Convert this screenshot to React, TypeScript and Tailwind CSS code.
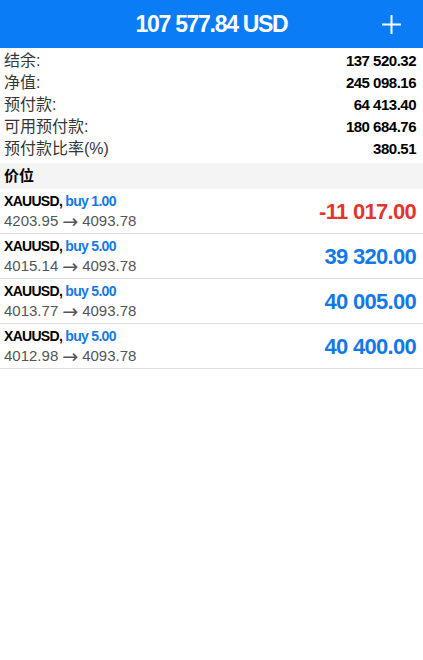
const summary = [
  { label: '结余:', value: '137 520.32' },
  { label: '净值:', value: '245 098.16' },
  { label: '预付款:', value: '64 413.40' },
  { label: '可用预付款:', value: '180 684.76' },
  { label: '预付款比率(%)', value: '380.51' },
];

const positions = [
  { symbol: 'XAUUSD', side: 'buy 1.00', open: '4203.95', current: '4093.78', profit: '-11 017.00', loss: true },
  { symbol: 'XAUUSD', side: 'buy 5.00', open: '4015.14', current: '4093.78', profit: '39 320.00', loss: false },
  { symbol: 'XAUUSD', side: 'buy 5.00', open: '4013.77', current: '4093.78', profit: '40 005.00', loss: false },
  { symbol: 'XAUUSD', side: 'buy 5.00', open: '4012.98', current: '4093.78', profit: '40 400.00', loss: false },
];

const sans = "font-['Liberation_Sans','Noto_Sans_CJK_SC',sans-serif]";

export default function App() {
  return (
    <div className={`${sans} min-h-[660px] w-full bg-white`}>
      <header className="relative flex h-12 items-center justify-center bg-[#0a7cf6]">
        <h1 className="text-[23px] font-bold tracking-[-1.3px] text-white">107 577.84 USD</h1>
        <svg className="absolute right-[22px] top-[15px] h-[19px] w-[19px]" viewBox="0 0 19 19" fill="none">
          <path d="M9.5 0v19M0 9.5h19" stroke="white" strokeWidth="2" />
        </svg>
      </header>

      <div className="pb-[3px] pt-[2px]">
        {summary.map((s) => (
          <div key={s.label} className="flex h-[22px] items-center justify-between pl-[4px] pr-[7px]">
            <span className="text-[16px] text-[#363636]">{s.label}</span>
            <span className="text-[15px] font-bold tracking-[-0.5px] text-black">{s.value}</span>
          </div>
        ))}
      </div>

      <div className="flex h-[26px] items-center bg-[#f4f4f4] pl-[4px]">
        <span className="text-[15px] font-bold text-black">价位</span>
      </div>

      <div>
        {positions.map((p, i) => (
          <div key={i} className="flex h-[45px] items-center justify-between border-b border-[#dedede] pl-[4px] pr-[7px]">
            <div className="flex flex-col pb-[1px]">
              <div className="h-[20px] text-[14px] font-bold leading-[20px] tracking-[-0.7px]">
                <span className="text-black">{p.symbol}, </span>
                <span className="text-[#1479e6]">{p.side}</span>
              </div>
              <div className="flex h-[20px] items-center gap-[4px] text-[15px] leading-[20px] text-[#555555]">
                <span>{p.open}</span>
                <span className="font-['DejaVu_Sans',sans-serif] text-[19px] leading-[20px]">→</span>
                <span>{p.current}</span>
              </div>
            </div>
            <span
              className={`text-[22px] font-bold tracking-[-0.7px] ${p.loss ? 'text-[#e2352c]' : 'text-[#1479e6]'}`}
            >
              {p.profit}
            </span>
          </div>
        ))}
      </div>
    </div>
  );
}
